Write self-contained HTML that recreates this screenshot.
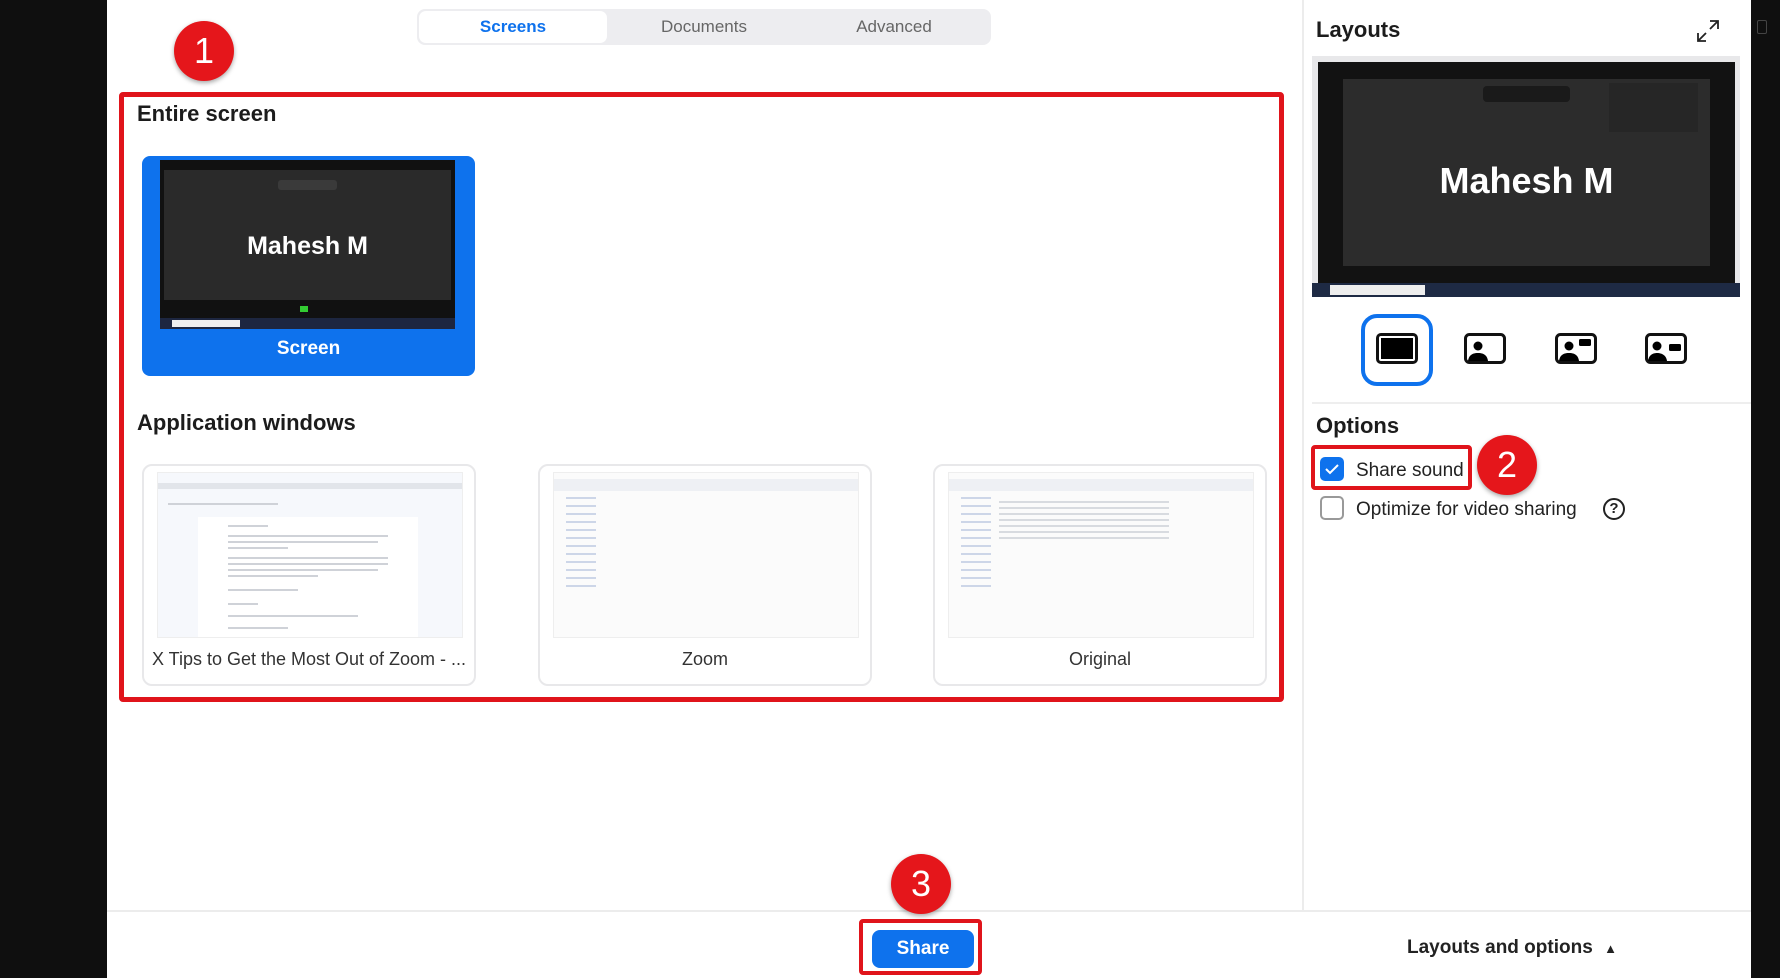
<!DOCTYPE html>
<html><head><meta charset="utf-8"><style>
*{margin:0;padding:0;box-sizing:border-box}
body{width:1780px;height:978px;background:#0f0f0f;position:relative;overflow:hidden;font-family:"Liberation Sans",sans-serif;color:#222}
.a{position:absolute}
.main{left:107px;top:0;width:1644px;height:978px;background:#fff}
.circ{position:absolute;border-radius:50%;background:#e5161b;color:#fff;font-size:36px;text-align:center;box-shadow:0 2px 5px rgba(0,0,0,.35)}
.card{position:absolute;border:2px solid #e8e8ea;border-radius:10px;background:#fff;top:464px;width:334px;height:222px}
.card .lbl{position:absolute;left:0;right:0;top:183px;text-align:center;font-size:18px;color:#333}
.card .th{position:absolute;left:13px;top:6px;width:306px;height:166px;background:#fbfbfb;border:1px solid #eee;overflow:hidden}
.tl{position:absolute;height:2px;background:#cfd2d8}
.h{font-weight:bold;font-size:22px;color:#1c1c1c}
.line{position:absolute;height:2px;background:#ddd}
</style></head><body>
<div class="a main"></div>
<div class="a" style="left:1757px;top:20px;width:10px;height:14px;border:1px solid #444;border-radius:2px"></div>
<div class="a" style="left:1302px;top:0;width:2px;height:911px;background:#ececec"></div>
<div class="a" style="left:107px;top:910px;width:1644px;height:2px;background:#ececec"></div>
<div class="a" style="left:417px;top:9px;width:574px;height:36px;background:#ededf0;border-radius:8px"></div>
<div class="a" style="left:419px;top:11px;width:188px;height:32px;background:#fff;border-radius:7px"></div>
<div class="a" style="left:419px;top:17px;width:188px;text-align:center;font-size:17px;color:#0e72ed;font-weight:bold">Screens</div>
<div class="a" style="left:610px;top:17px;width:188px;text-align:center;font-size:17px;color:#666">Documents</div>
<div class="a" style="left:800px;top:17px;width:188px;text-align:center;font-size:17px;color:#666">Advanced</div>
<div class="a" style="left:119px;top:92px;width:1165px;height:610px;border:5px solid #e0141b;border-radius:4px"></div>
<div class="circ" style="left:174px;top:21px;width:60px;height:60px;line-height:60px">1</div>
<div class="a h" style="left:137px;top:101px">Entire screen</div>
<div class="a" style="left:142px;top:156px;width:333px;height:220px;background:#0e72ed;border-radius:8px"></div>
<div class="a" style="left:160px;top:160px;width:295px;height:169px;background:#111"></div>
<div class="a" style="left:164px;top:170px;width:287px;height:142px;background:#2a2a2a"></div>
<div class="a" style="left:164px;top:300px;width:287px;height:14px;background:#111"></div>
<div class="a" style="left:160px;top:318px;width:295px;height:11px;background:#1d2640"></div>
<div class="a" style="left:172px;top:320px;width:68px;height:7px;background:#eee"></div>
<div class="a" style="left:300px;top:306px;width:8px;height:6px;background:#3c3"></div>
<div class="a" style="left:278px;top:180px;width:59px;height:10px;background:#3a3a3a;border-radius:3px"></div>
<div class="a" style="left:160px;top:232px;width:295px;text-align:center;color:#fff;font-weight:bold;font-size:25px">Mahesh M</div>
<div class="a" style="left:142px;top:338px;width:333px;text-align:center;color:#fff;font-weight:bold;font-size:19px">Screen</div>
<div class="a h" style="left:137px;top:410px">Application windows</div>
<div class="card" style="left:142px"><div class="th" style="background:#f6f8fc">
<div class="tl" style="left:0;top:10px;width:306px;background:#e2e5ea;height:6px"></div>
<div class="tl" style="left:10px;top:30px;width:110px"></div>
<div style="position:absolute;left:40px;top:44px;width:220px;height:122px;background:#fff">
<div class="tl" style="left:30px;top:8px;width:40px"></div>
<div class="tl" style="left:30px;top:18px;width:160px"></div>
<div class="tl" style="left:30px;top:24px;width:150px"></div>
<div class="tl" style="left:30px;top:30px;width:60px"></div>
<div class="tl" style="left:30px;top:40px;width:160px"></div>
<div class="tl" style="left:30px;top:46px;width:160px"></div>
<div class="tl" style="left:30px;top:52px;width:150px"></div>
<div class="tl" style="left:30px;top:58px;width:90px"></div>
<div class="tl" style="left:30px;top:72px;width:70px"></div>
<div class="tl" style="left:30px;top:86px;width:30px"></div>
<div class="tl" style="left:30px;top:98px;width:130px"></div>
<div class="tl" style="left:30px;top:110px;width:60px"></div>
</div></div><div class="lbl">X Tips to Get the Most Out of Zoom - ...</div></div>
<div class="card" style="left:538px"><div class="th"><div class="tl" style="left:0;top:6px;width:306px;height:12px;background:#eef0f4"></div><div class="tl" style="left:12px;top:24px;width:30px;height:90px;background:repeating-linear-gradient(#cdd6e8 0 2px,transparent 2px 8px)"></div></div><div class="lbl">Zoom</div></div>
<div class="card" style="left:933px"><div class="th"><div class="tl" style="left:0;top:6px;width:306px;height:12px;background:#eef0f4"></div><div class="tl" style="left:12px;top:24px;width:30px;height:90px;background:repeating-linear-gradient(#cdd6e8 0 2px,transparent 2px 8px)"></div><div class="tl" style="left:50px;top:28px;width:170px;height:40px;background:repeating-linear-gradient(#d8dbe0 0 2px,transparent 2px 6px)"></div></div><div class="lbl">Original</div></div>
<div class="a h" style="left:1316px;top:17px">Layouts</div>
<svg class="a" style="left:1696px;top:19px" width="24" height="24" viewBox="0 0 24 24" fill="none" stroke="#222" stroke-width="1.8"><path d="M14 2h8v8M22 2l-8 8M2 14v8h8M2 22l8-8"/></svg>
<div class="a" style="left:1312px;top:56px;width:428px;height:241px;background:#e8e8ea"></div>
<div class="a" style="left:1318px;top:62px;width:417px;height:224px;background:#121212"></div>
<div class="a" style="left:1343px;top:79px;width:367px;height:187px;background:#2c2c2c"></div>
<div class="a" style="left:1483px;top:86px;width:87px;height:16px;background:#1a1a1a;border-radius:4px"></div>
<div class="a" style="left:1609px;top:83px;width:89px;height:49px;background:#262626"></div>
<div class="a" style="left:1312px;top:283px;width:428px;height:14px;background:#1e2a44"></div>
<div class="a" style="left:1330px;top:285px;width:95px;height:10px;background:#eee"></div>
<div class="a" style="left:1318px;top:160px;width:417px;text-align:center;color:#fff;font-weight:bold;font-size:36px">Mahesh M</div>
<div class="a" style="left:1361px;top:314px;width:72px;height:72px;border:4px solid #0e72ed;border-radius:16px"></div>
<div class="a" style="left:1376px;top:333px;width:42px;height:31px;border:3px solid #111;border-radius:5px;background:#fff"><div style="position:absolute;left:2px;top:2px;right:2px;bottom:2px;background:#000"></div></div>
<svg class="a" style="left:1464px;top:333px" width="42" height="31" viewBox="0 0 42 31"><rect x="1.5" y="1.5" width="39" height="28" rx="4" fill="#fff" stroke="#111" stroke-width="3"/><circle cx="14" cy="13" r="4.5"/><path d="M4 28c1-7 6-8 10-8s9 1 10 8z"/></svg>
<svg class="a" style="left:1555px;top:333px" width="42" height="31" viewBox="0 0 42 31"><rect x="1.5" y="1.5" width="39" height="28" rx="4" fill="#fff" stroke="#111" stroke-width="3"/><circle cx="14" cy="13" r="4.5"/><path d="M4 28c1-7 6-8 10-8s9 1 10 8z"/><rect x="24" y="6" width="12" height="7" rx="1.5"/></svg>
<svg class="a" style="left:1645px;top:333px" width="42" height="31" viewBox="0 0 42 31"><rect x="1.5" y="1.5" width="39" height="28" rx="4" fill="#fff" stroke="#111" stroke-width="3"/><circle cx="12" cy="13" r="4.5"/><path d="M3 28c1-7 6-8 9-8s9 1 10 8z"/><rect x="24" y="11" width="12" height="7" rx="1.5"/></svg>
<div class="line" style="left:1312px;top:402px;width:439px;background:#eee"></div>
<div class="a h" style="left:1316px;top:413px">Options</div>
<div class="a" style="left:1311px;top:445px;width:161px;height:45px;border:4px solid #e0141b;border-radius:4px"></div>
<div class="a" style="left:1320px;top:457px;width:24px;height:24px;background:#0e72ed;border-radius:5px"><svg width="24" height="24" viewBox="0 0 24 24" fill="none" stroke="#fff" stroke-width="2"><path d="M6 12l4 4 8-8"/></svg></div>
<div class="a" style="left:1356px;top:460px;font-size:19px;color:#222">Share sound</div>
<div class="circ" style="left:1477px;top:435px;width:60px;height:60px;line-height:60px">2</div>
<div class="a" style="left:1320px;top:496px;width:24px;height:24px;border:2px solid #999;border-radius:5px"></div>
<div class="a" style="left:1356px;top:499px;font-size:19px;color:#222">Optimize for video sharing</div>
<div class="a" style="left:1603px;top:498px;width:22px;height:22px;border:2px solid #222;border-radius:50%;text-align:center;font-size:15px;line-height:18px;font-weight:bold">?</div>
<div class="circ" style="left:891px;top:854px;width:60px;height:60px;line-height:60px">3</div>
<div class="a" style="left:859px;top:919px;width:123px;height:56px;border:4px solid #e0141b;border-radius:4px"></div>
<div class="a" style="left:872px;top:930px;width:102px;height:38px;background:#0e72ed;border-radius:8px;color:#fff;font-weight:bold;font-size:19px;text-align:center;line-height:38px">Share</div>
<div class="a" style="left:1407px;top:937px;font-size:19px;font-weight:bold;color:#222">Layouts and options <span style="font-size:13px;margin-left:6px">▲</span></div>
</body></html>
